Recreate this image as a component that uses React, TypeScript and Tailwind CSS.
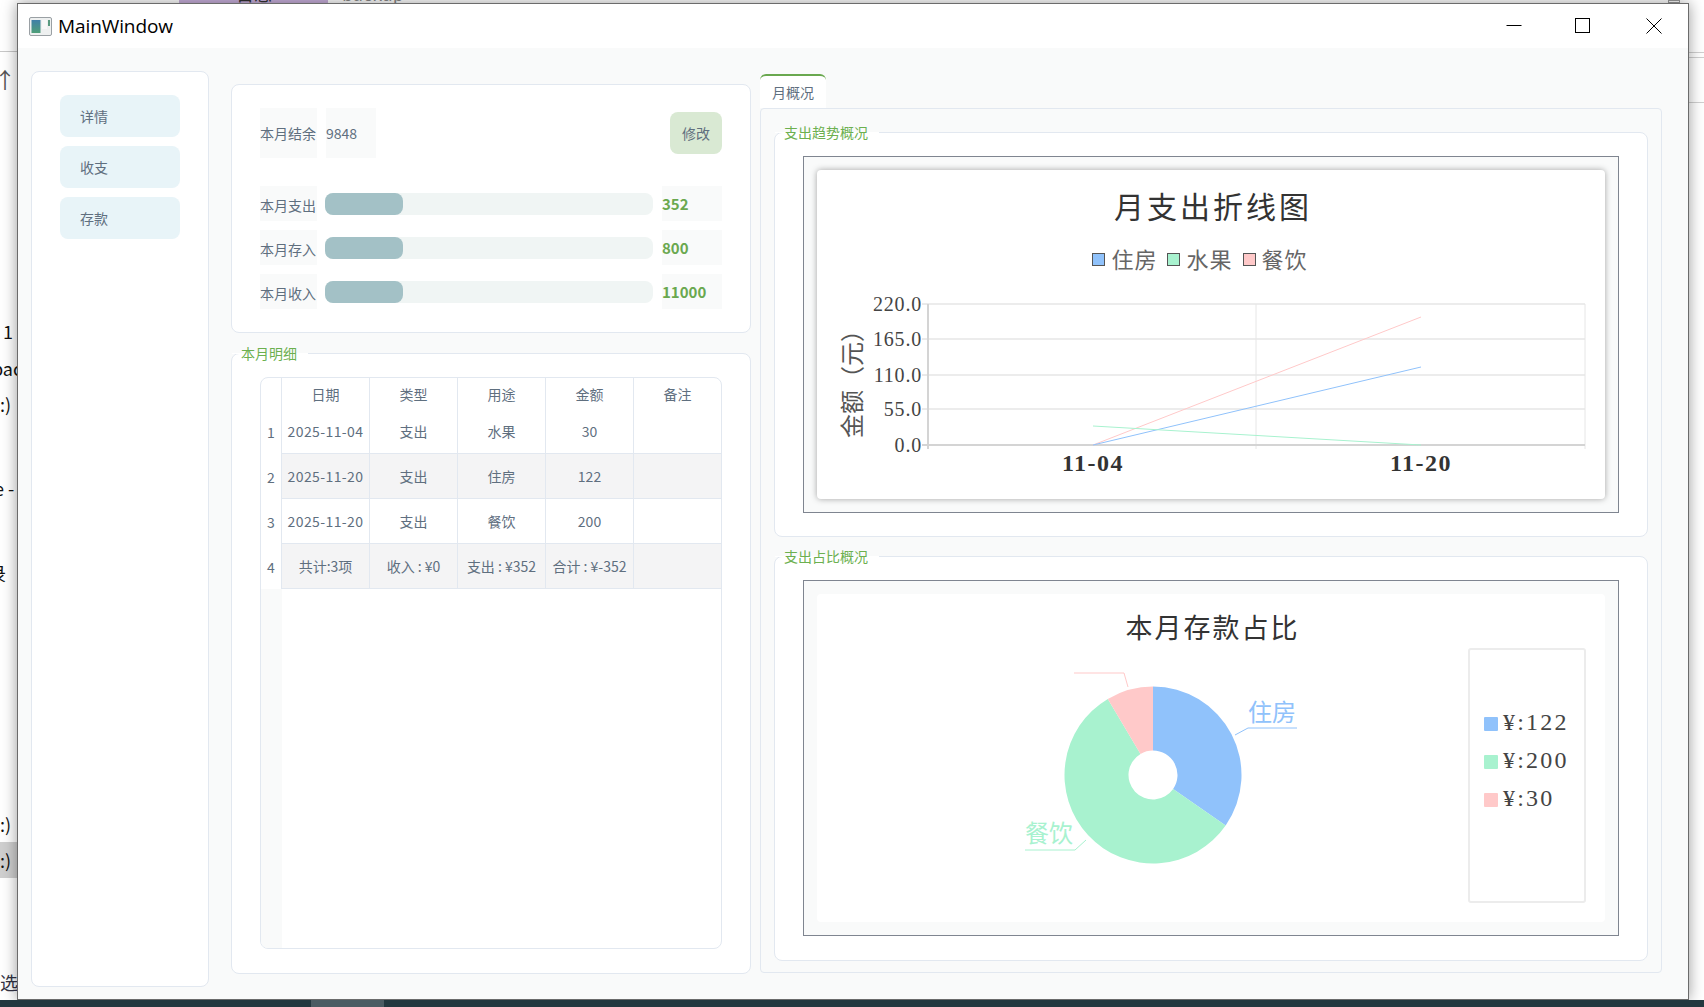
const FONT_UI = "font-['Noto_Sans_CJK_SC','Noto_Sans',sans-serif]"
const FONT_CHART = "font-['Liberation_Serif','Noto_Sans_CJK_SC',serif]"

const navItems = ['详情', '收支', '存款']

const progressRows = [
  { label: '本月支出', value: '352' },
  { label: '本月存入', value: '800' },
  { label: '本月收入', value: '11000' },
]

const tableColumns = ['日期', '类型', '用途', '金额', '备注']

const tableRows = [
  ['2025-11-04', '支出', '水果', '30', ''],
  ['2025-11-20', '支出', '住房', '122', ''],
  ['2025-11-20', '支出', '餐饮', '200', ''],
  ['共计:3项', '收入 : ¥0', '支出 : ¥352', '合计 : ¥-352', ''],
]

const BLUE = '#90c2fb'
const GREEN = '#a8f2cf'
const PINK = '#ffc9c9'

function GroupBox({ title, className, children }: { title: string; className: string; children: React.ReactNode }) {
  return (
    <div className={`relative rounded-lg border border-[#e2e8f0] bg-white ${className}`}>
      <div className={`absolute -top-px left-0 h-px bg-white ${title.length > 4 ? 'w-[104px]' : 'w-[76px]'}`} />
      <div className="absolute -top-[11px] left-[9px] text-sm leading-5 text-[#6cb04f]">{title}</div>
      {children}
    </div>
  )
}

function ChartFrame({ className, children }: { className: string; children: React.ReactNode }) {
  return <div className={`border border-[#7f8590] bg-[#f9fafa] p-[13px] ${className}`}>{children}</div>
}

function WindowIcon() {
  return (
    <svg viewBox="0 0 23 19" className="h-[19px] w-[23px]" aria-hidden="true">
      <defs>
        <linearGradient id="icon-fill" x1="0" y1="0" x2="0" y2="1">
          <stop offset="0" stopColor="#3f7fa8" />
          <stop offset="1" stopColor="#4f9f78" />
        </linearGradient>
      </defs>
      <rect x="0.5" y="0.5" width="22" height="18" rx="1.5" fill="#eef0f0" stroke="#9aa0a4" />
      <rect x="2.5" y="3" width="9" height="13" fill="url(#icon-fill)" />
      <rect x="13" y="3" width="5" height="9" fill="#f8f8f8" />
      <rect x="19" y="3" width="2" height="6" fill="#5a9a80" />
    </svg>
  )
}

function LineChart() {
  const gridY = [28, 63, 99, 133]
  const yLabels = [
    { text: '220.0', y: 28 },
    { text: '165.0', y: 63 },
    { text: '110.0', y: 99 },
    { text: '55.0', y: 133 },
    { text: '0.0', y: 169 },
  ]
  return (
    <svg viewBox="0 0 788 223" className={`mt-[3px] block h-[223px] w-[788px] ${FONT_CHART}`}>
      {gridY.map((y) => (
        <line key={y} x1="111" x2="768" y1={y} y2={y} stroke="#e6e6e6" strokeWidth="1.5" />
      ))}
      <line x1="439" x2="439" y1="28" y2="173" stroke="#e6e6e6" />
      <line x1="768" x2="768" y1="28" y2="173" stroke="#e6e6e6" />
      <line x1="111" x2="111" y1="28" y2="173" stroke="#d4d4d4" strokeWidth="2" />
      <line x1="105" x2="768" y1="169" y2="169" stroke="#d4d4d4" strokeWidth="2" />
      {gridY.map((y) => (
        <line key={y} x1="105" x2="111" y1={y} y2={y} stroke="#d4d4d4" />
      ))}
      <line x1="276" x2="604" y1="169" y2="41" stroke={PINK} />
      <line x1="276" x2="604" y1="169" y2="91" stroke={BLUE} />
      <line x1="276" x2="604" y1="150" y2="169" stroke={GREEN} />
      {yLabels.map((label) => (
        <text key={label.text} x="105" y={label.y + 6.5} textAnchor="end" fontSize="20" letterSpacing="0.8" fill="#444">
          {label.text}
        </text>
      ))}
      <text x="276" y="195" textAnchor="middle" fontSize="24" fontWeight="700" letterSpacing="1.5" fill="#333">
        11-04
      </text>
      <text x="604" y="195" textAnchor="middle" fontSize="24" fontWeight="700" letterSpacing="1.5" fill="#333">
        11-20
      </text>
      <text
        transform="translate(36 102) rotate(-90)"
        textAnchor="middle"
        fontSize="24"
        fill="#555"
        dominantBaseline="central"
      >
        金额（元）
      </text>
    </svg>
  )
}

function polar(angle: number, radius: number) {
  const rad = (angle * Math.PI) / 180
  return [336 + radius * Math.sin(rad), 129 - radius * Math.cos(rad)]
}

function slicePath(start: number, end: number) {
  const [x1, y1] = polar(start, 88.5)
  const [x2, y2] = polar(end, 88.5)
  const [x3, y3] = polar(end, 24.5)
  const [x4, y4] = polar(start, 24.5)
  const large = end - start > 180 ? 1 : 0
  return `M${x1} ${y1}A88.5 88.5 0 ${large} 1 ${x2} ${y2}L${x3} ${y3}A24.5 24.5 0 ${large} 0 ${x4} ${y4}Z`
}

function PieChart() {
  return (
    <svg viewBox="0 2 651 268" className={`block h-[268px] w-[651px] shrink-0 ${FONT_UI}`}>
      <path d={slicePath(0, 124.8)} fill={BLUE} />
      <path d={slicePath(124.8, 329.3)} fill={GREEN} />
      <path d={slicePath(329.3, 360)} fill={PINK} />
      <polyline points="418,89 431,82 480,82" fill="none" stroke={BLUE} />
      <polyline points="269,194 258,204 208,204" fill="none" stroke={GREEN} />
      <polyline points="311,41 307,27 257,27" fill="none" stroke={PINK} />
      <text x="431" y="75" fontSize="24" fill={BLUE}>住房</text>
      <text x="208" y="196" fontSize="24" fill={GREEN}>餐饮</text>
    </svg>
  )
}

export default function App() {
  return (
    <div className={`relative h-[1007px] w-[1704px] overflow-hidden bg-white ${FONT_UI}`}>
      {/* desktop behind the window */}
      <div className="absolute left-[179px] top-0 h-[3px] w-[149px] overflow-hidden bg-[#c9b0dc]">
        <div className="absolute left-[57px] -top-[17px] text-lg leading-5 text-[#333]">日志</div>
      </div>
      <div className="absolute left-[342px] -top-[17px] text-lg leading-5 text-[#888]">backup</div>
      <div className="absolute left-[1668px] top-0 h-[3px] w-[12px] border border-[#999]" />
      <div className="absolute left-0 top-[51px] h-px w-[17px] bg-[#c8c8c8]" />
      <div className="absolute left-[1689px] top-[52px] h-px w-[15px] bg-[#d0d0d0]" />
      <div className="absolute left-[1689px] top-[57px] h-px w-[15px] bg-[#d0d0d0]" />
      <div className="absolute left-[1689px] top-[102px] h-px w-[15px] bg-[#d0d0d0]" />
      <div className="absolute left-0 top-[842px] h-[36px] w-[17px] bg-[#cfcfcf]" />
      <div className="absolute -left-[6px] top-[66px] text-[22px] leading-6 text-[#555]">↑</div>
      <div className="absolute left-[3px] top-[319px] text-lg leading-6 text-[#111]">1</div>
      <div className="absolute -left-[8px] top-[356px] text-lg leading-6 text-[#111]">bac</div>
      <div className="absolute left-0 top-[392px] text-lg leading-6 text-[#111]">:)</div>
      <div className="absolute -left-[6px] top-[476px] text-lg leading-6 text-[#111]">e -</div>
      <div className="absolute -left-[12px] top-[561px] text-lg leading-6 text-[#111]">录</div>
      <div className="absolute left-0 top-[812px] text-lg leading-6 text-[#111]">:)</div>
      <div className="absolute left-0 top-[848px] text-lg leading-6 text-[#111]">:)</div>
      <div className="absolute left-0 top-[970px] text-lg leading-6 text-[#334]">选</div>

      {/* app window */}
      <div className="absolute left-[17px] top-[3px] flex h-[997px] w-[1672px] flex-col border border-[#6b6b6b] bg-[#f9fafa] shadow-[0_0_14px_rgba(0,0,0,0.4)]">
        <div className="flex h-[44px] shrink-0 items-center bg-white pl-[11px] text-black">
          <WindowIcon />
          <span className="ml-[6px] font-['Open_Sans',sans-serif] text-[19px] leading-6 tracking-[-0.1px]">MainWindow</span>
          <div className="ml-auto flex items-center">
            <svg viewBox="0 0 16 16" className="h-4 w-4" aria-hidden="true">
              <line x1="0.5" x2="15.5" y1="7.5" y2="7.5" stroke="#000" />
            </svg>
            <svg viewBox="0 0 16 16" className="ml-[53px] h-4 w-4" aria-hidden="true">
              <rect x="0.5" y="0.5" width="14" height="14" fill="none" stroke="#000" />
            </svg>
            <svg viewBox="0 0 16 16" className="ml-[55px] mr-[26px] h-4 w-4" aria-hidden="true">
              <path d="M0.5 0.5L15.5 15.5M15.5 0.5L0.5 15.5" stroke="#000" fill="none" />
            </svg>
          </div>
        </div>

        <div className="flex flex-1 pl-[13px] text-sm text-[#5f6f7f]">
          <aside className="mt-[23px] flex h-[916px] w-[178px] shrink-0 flex-col gap-[9px] rounded-lg border border-[#e2e8f0] bg-white px-[28px] pt-[23px]">
            {navItems.map((item) => (
              <div key={item} className="flex h-[42px] w-[120px] items-center rounded-lg bg-[#e8f4f8] pl-5">
                {item}
              </div>
            ))}
          </aside>

          <div className="ml-[22px] mt-[36px] flex w-[520px] shrink-0 flex-col gap-5">
            <div className="h-[249px] rounded-lg border border-[#e2e8f0] bg-white pl-[28px] pr-[28px] pt-[23px]">
              <div className="flex h-[50px] items-center">
                <div className="flex h-full w-[57px] items-center bg-[#f9fafa]">本月结余</div>
                <div className="ml-[9px] flex h-full w-[50px] items-center bg-[#f9fafa]">9848</div>
                <button type="button" className="ml-auto flex h-[42px] w-[52px] items-center justify-center rounded-lg bg-[#d9e9d3]">
                  修改
                </button>
              </div>
              <div className="mt-[28px] flex flex-col gap-[9px]">
                {progressRows.map((row) => (
                  <div key={row.label} className="flex h-[35px] items-center">
                    <div className="flex h-full w-[57px] items-center bg-[#f9fafa] pt-[2px]">{row.label}</div>
                    <div className="ml-[8px] h-[22px] w-[328px] rounded-lg bg-[#f0f5f4]">
                      <div className="h-full w-[78px] rounded-lg bg-[#a3c1c6]" />
                    </div>
                    <div className="ml-[9px] flex h-full w-[60px] items-center bg-[#f9fafa] text-[15px] font-bold text-[#6aa84f]">
                      {row.value}
                    </div>
                  </div>
                ))}
              </div>
            </div>

            <GroupBox title="本月明细" className="h-[621px] pl-[28px] pt-[23px]">
              <div className="flex h-[572px] w-[462px] flex-col overflow-hidden rounded-lg border border-[#e2e8f0] bg-white">
                <div className="flex h-[31px] shrink-0">
                  <div className="w-[21px] border-r border-[#e2e8f0]" />
                  {tableColumns.map((column, columnIndex) => (
                    <div
                      key={column}
                      className={`flex items-center justify-center ${
                        columnIndex === 4 ? 'w-[87px]' : 'w-[88px] border-r border-[#e2e8f0]'
                      }`}
                    >
                      {column}
                    </div>
                  ))}
                </div>
                {tableRows.map((row, rowIndex) => (
                  <div key={rowIndex} className="flex h-[45px] shrink-0">
                    <div className="flex w-[21px] items-center justify-center border-r border-[#e2e8f0]">{rowIndex + 1}</div>
                    {row.map((cell, cellIndex) => (
                      <div
                        key={cellIndex}
                        className={`flex items-center justify-center whitespace-nowrap border-b border-[#e2e8f0] ${
                          cellIndex === 4 ? 'w-[87px]' : 'w-[88px] border-r'
                        } ${rowIndex % 2 === 1 ? 'bg-[#f4f4f5]' : ''} ${
                          cellIndex === 0 && rowIndex < 3 ? 'tracking-[0.4px]' : ''
                        }`}
                      >
                        {cell}
                      </div>
                    ))}
                  </div>
                ))}
                <div className="w-[21px] flex-1 bg-[#f9fafa]" />
              </div>
            </GroupBox>
          </div>

          <div className="ml-[9px] mt-[26px] flex w-[902px] shrink-0 flex-col">
            <div className="flex h-[34px] shrink-0 items-end">
              <div className="flex h-[34px] w-[66px] items-center rounded-t-md border-t-2 border-[#6aa84f] bg-white pl-3">
                月概况
              </div>
            </div>
            <div className="flex h-[865px] flex-col gap-[19px] rounded-sm border border-[#e2e8f0] px-[13px] pt-[23px]">
              <GroupBox title="支出趋势概况" className="h-[405px] shrink-0 px-[28px] pt-[23px]">
                <ChartFrame className="h-[357px]">
                  <div className="flex h-[329px] flex-col items-center rounded bg-white pt-[17px] shadow-[0_0_6px_rgba(0,0,0,0.35)]">
                    <div className="pl-[4px] text-[30px] leading-9 tracking-[3px] text-[#333]">月支出折线图</div>
                    <div className="mr-[22px] mt-[22px] flex h-7 items-center text-[22px] tracking-[1px] text-[#666]">
                      <span className="h-[13px] w-[13px] border-[1.5px] border-[#555] bg-[#90c2fb]" />
                      <span className="ml-[6px]">住房</span>
                      <span className="ml-[10px] h-[13px] w-[13px] border-[1.5px] border-[#555] bg-[#a8f2cf]" />
                      <span className="ml-[6px]">水果</span>
                      <span className="ml-[10px] h-[13px] w-[13px] border-[1.5px] border-[#555] bg-[#ffc9c9]" />
                      <span className="ml-[6px]">餐饮</span>
                    </div>
                    <LineChart />
                  </div>
                </ChartFrame>
              </GroupBox>

              <GroupBox title="支出占比概况" className="h-[405px] shrink-0 px-[28px] pt-[23px]">
                <ChartFrame className="h-[356px]">
                  <div className="flex h-[328px] flex-col rounded-sm bg-white pt-[16px]">
                    <div className="pl-[3px] text-center text-[27px] leading-[34px] tracking-[2px] text-[#333]">本月存款占比</div>
                    <div className="mt-[4px] flex">
                      <PieChart />
                      <div className={`flex h-[255px] w-[118px] flex-col gap-[14px] rounded-[3px] border-2 border-[#ececec] pl-[14px] pt-[60px] text-[24px] leading-6 tracking-[2.2px] text-[#444] ${FONT_CHART}`}>
                        <div className="flex items-center gap-[5px]">
                          <span className="mt-[4px] h-[14px] w-[14px] rounded-[1px] bg-[#90c2fb]" />¥:122
                        </div>
                        <div className="flex items-center gap-[5px]">
                          <span className="mt-[4px] h-[14px] w-[14px] rounded-[1px] bg-[#a8f2cf]" />¥:200
                        </div>
                        <div className="flex items-center gap-[5px]">
                          <span className="mt-[4px] h-[14px] w-[14px] rounded-[1px] bg-[#ffc9c9]" />¥:30
                        </div>
                      </div>
                    </div>
                  </div>
                </ChartFrame>
              </GroupBox>
            </div>
          </div>
        </div>
      </div>

      {/* taskbar strip */}
      <div className="absolute bottom-0 left-0 h-[7px] w-full bg-[#22383f]">
        <div className="ml-[311px] h-full w-[73px] bg-[#4a5c63]" />
      </div>
    </div>
  )
}
